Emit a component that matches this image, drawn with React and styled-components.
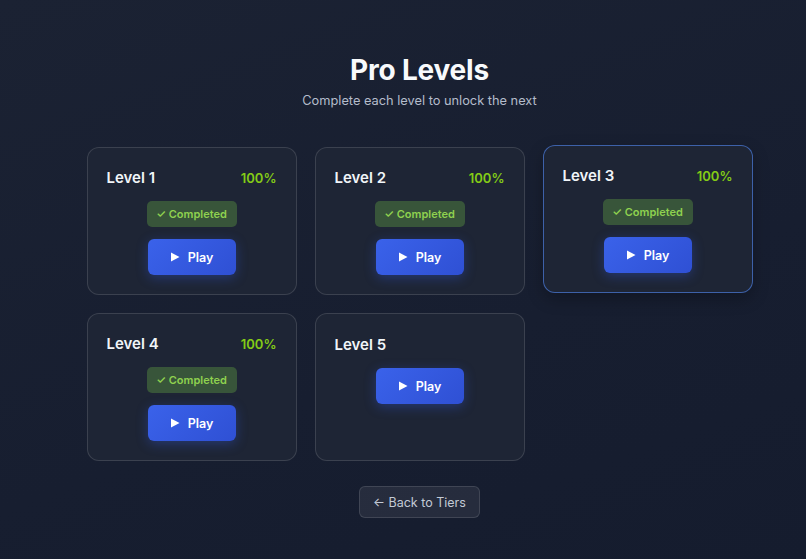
import React from 'react'
import styled, { createGlobalStyle } from 'styled-components'

const GlobalStyle = createGlobalStyle`
  html, body {
    margin: 0;
    padding: 0;
    background: #181f30;
  }
  body {
    font-family: Inter, "Noto Sans", sans-serif;
    -webkit-font-smoothing: antialiased;
  }
`

const levels = [
    { id: 1, progress: 100, completed: true },
    { id: 2, progress: 100, completed: true },
    { id: 3, progress: 100, completed: true, active: true },
    { id: 4, progress: 100, completed: true },
    { id: 5, progress: 0, completed: false },
]

export default function App() {
    return (
        <>
            <GlobalStyle />
            <Page>
                <Header>
                    <Title>Pro Levels</Title>
                    <Subtitle>Complete each level to unlock the next</Subtitle>
                </Header>
                <Grid>
                    {levels.map(level => (
                        <Card key={level.id} $active={level.active}>
                            <CardHead>
                                <LevelName>Level {level.id}</LevelName>
                                {level.progress > 0 && <Progress>{level.progress}%</Progress>}
                            </CardHead>
                            {level.completed && <Badge>✓ Completed</Badge>}
                            <PlayButton>
                                <PlayIcon viewBox="0 0 10 10"><path d="M1 0.5 L9.5 5 L1 9.5 Z" /></PlayIcon>
                                Play
                            </PlayButton>
                        </Card>
                    ))}
                </Grid>
                <BackButton>← Back to Tiers</BackButton>
            </Page>
        </>
    )
}

const Page = styled.div`
    min-height: 559px;
    box-sizing: border-box;
    padding: 54px 0 0 33px;
    display: flex;
    flex-direction: column;
    align-items: center;
    background: linear-gradient(160deg, #1b2233 0%, #171e30 60%, #151c2e 100%);
`
const Header = styled.div`
    display: flex;
    flex-direction: column;
    align-items: center;
`
const Title = styled.h1`
    margin: 0;
    font-size: 28px;
    line-height: 32px;
    font-weight: 700;
    color: #f8fafc;
    letter-spacing: -0.2px;
`
const Subtitle = styled.p`
    margin: 6px 0 0;
    font-size: 12.8px;
    line-height: 18px;
    color: #b4bccb;
`
const Grid = styled.div`
    margin-top: 37px;
    display: grid;
    grid-template-columns: repeat(3, 210px);
    gap: 18px;
`
const Card = styled.div`
    box-sizing: border-box;
    height: 148px;
    padding: 20px 19px 19px;
    display: flex;
    flex-direction: column;
    align-items: center;
    background: #1e2535;
    border: 1px solid ${p => p.$active ? 'rgba(74, 122, 220, 0.7)' : 'rgba(255, 255, 255, 0.13)'};
    border-radius: 12px;
    transform: ${p => p.$active ? 'translateY(-2px)' : 'none'};
    box-shadow: ${p => p.$active ? '0 6px 16px rgba(0, 0, 0, 0.25)' : 'none'};
`
const CardHead = styled.div`
    align-self: stretch;
    display: flex;
    justify-content: space-between;
    align-items: center;
    height: 20px;
    margin-bottom: 14px;
`
const LevelName = styled.span`
    font-size: 15px;
    font-weight: 600;
    color: #f1f5f9;
`
const Progress = styled.span`
    font-size: 13px;
    font-weight: 600;
    color: #84cc16;
`
const Badge = styled.div`
    box-sizing: border-box;
    flex-shrink: 0;
    width: 90px;
    height: 26px;
    margin-bottom: 12px;
    display: flex;
    align-items: center;
    justify-content: center;
    background: #38553a;
    border-radius: 5px;
    font-size: 11px;
    font-weight: 600;
    color: #8fd14f;
`
const PlayButton = styled.button`
    flex-shrink: 0;
    width: 88px;
    height: 36px;
    border: none;
    border-radius: 6px;
    display: flex;
    align-items: center;
    justify-content: center;
    gap: 8px;
    background: linear-gradient(135deg, #3a62ea 0%, #2f50d4 100%);
    box-shadow: 0 3px 12px rgba(52, 92, 230, 0.35);
    color: #ffffff;
    font-family: inherit;
    font-size: 12.5px;
    font-weight: 600;
    cursor: pointer;
`
const PlayIcon = styled.svg`
    width: 10px;
    height: 10px;
    fill: #ffffff;
`
const BackButton = styled.button`
    margin-top: 25px;
    width: 121px;
    height: 32px;
    border-radius: 6px;
    border: 1px solid rgba(255, 255, 255, 0.12);
    background: rgba(255, 255, 255, 0.07);
    color: #c3cad6;
    font-family: inherit;
    font-size: 12.5px;
    cursor: pointer;
`
